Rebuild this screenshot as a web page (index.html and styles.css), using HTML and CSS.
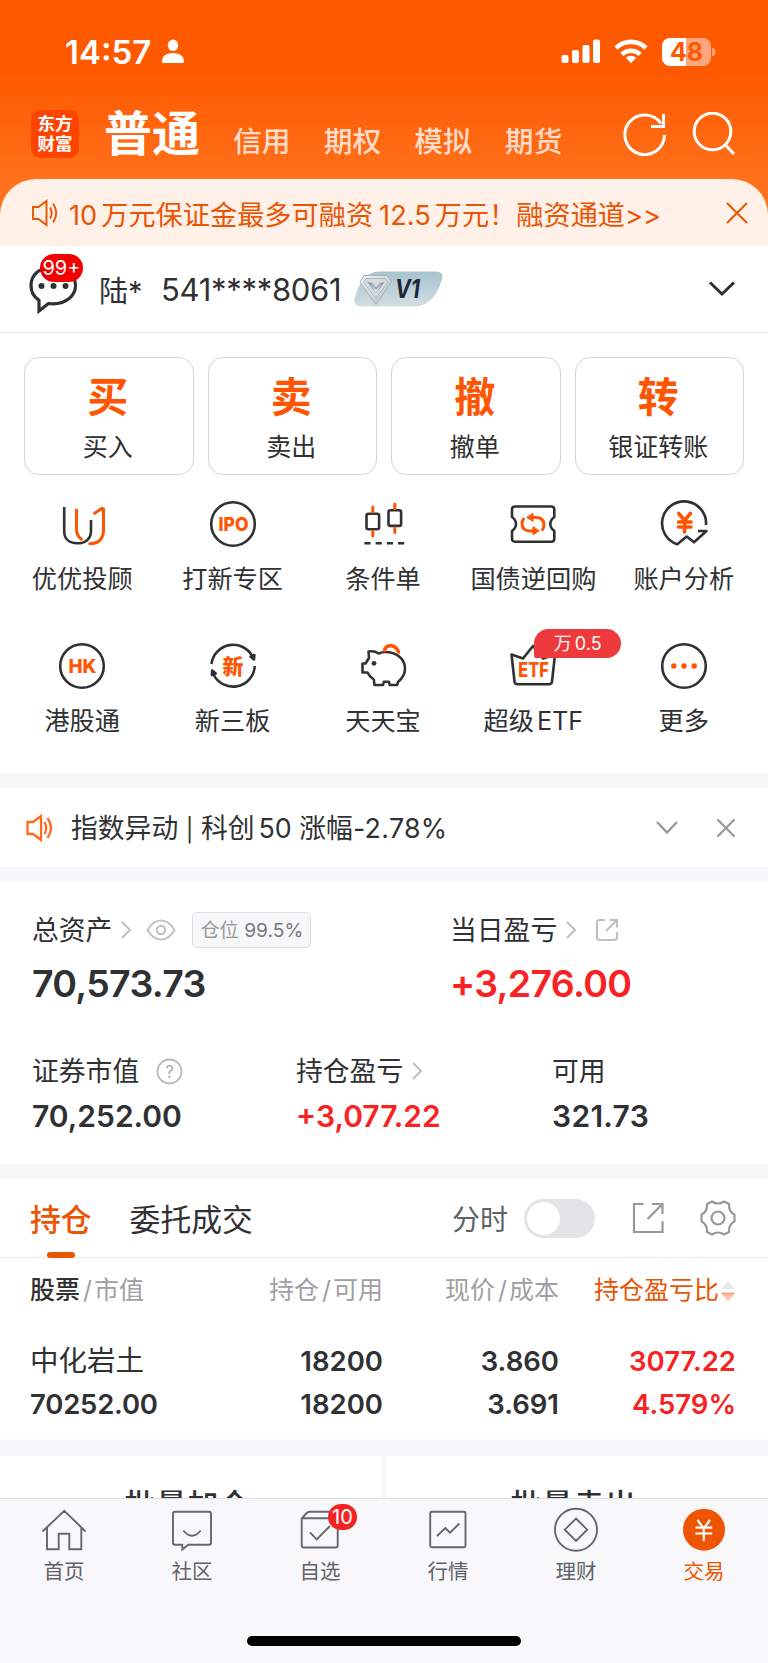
FILE: index.html
```html
<!DOCTYPE html>
<html lang="zh-CN">
<head>
    <meta charset="UTF-8">
    <meta name="viewport" content="width=device-width, initial-scale=1.0">
    <title>交易</title>
    <link rel="stylesheet" href="styles.css">
</head>
<body>
<div class="content">

    <!-- Header -->
    <div class="header">
        <div class="status-bar">
            <span class="time">14:57</span>
            <svg class="person" width="24" height="25" viewBox="0 0 24 25" fill="#fff"><ellipse cx="12" cy="6.3" rx="5.2" ry="5.8"/><path d="M1 22.500c0-5 4-8.500 11-8.500s11 3.500 11 8.500q0 1.500-1.500 1.500h-19Q1 24 1 22.500z"/></svg>
            <svg class="signal" width="40" height="25" viewBox="0 0 40 25" fill="#fff"><rect x="0.500" y="16" width="7" height="8" rx="2"/><rect x="11" y="11" width="7" height="13" rx="2"/><rect x="21.500" y="6" width="7" height="18" rx="2"/><rect x="32" y="0.500" width="7" height="23.500" rx="2"/></svg>
            <svg class="wifi" width="34" height="25" viewBox="0 0 34 25" fill="none" stroke="#fff" stroke-width="4.600"><path d="M2 9a21.500 21.500 0 0 1 30 0"/><path d="M7.800 15.400a13.300 13.300 0 0 1 18.400 0"/><path d="M17 24.300l-5.200-5.500a7.500 7.500 0 0 1 10.400 0z" fill="#fff" stroke="none"/></svg>
            <div class="battery"><span>48</span></div>
            <svg width="5" height="10" viewBox="0 0 5 10"><path d="M1 0.500q3.500 1.500 3.500 4.500T1 9.500z" fill="#ffa57c"/></svg>
        </div>
        <div class="nav">
            <div class="logo"><span>东方</span><span>财富</span></div>
            <span class="nav-active">普通</span>
            <div class="nav-links">
                <a>信用</a>
                <a>期权</a>
                <a>模拟</a>
                <a>期货</a>
            </div>
            <svg class="refresh" width="44" height="44" viewBox="0 0 44 44" fill="none" stroke="#fff" stroke-width="3"><path d="M41.500 23A19.800 19.800 0 1 1 38 11.500"/><path d="M40.500 2v12.500H28"/></svg>
            <svg width="44" height="44" viewBox="0 0 44 44" fill="none" stroke="#fff" stroke-width="3"><circle cx="20.500" cy="19.500" r="18.300"/><path d="M33.500 33l8.500 9"/></svg>
        </div>
    </div>

    <!-- Notice -->
    <div class="notice-wrap">
        <div class="notice">
            <svg width="28" height="28" viewBox="0 0 28 28" fill="none" stroke="#ea5504" stroke-width="1.900"><path d="M2 8h5.500L15.500 2v24L7.500 20H2z"/><path d="M19 8.500q3.500 5.500 0 11M22 4.500q6.500 9.500 0 19"/></svg>
            <span class="notice-text"><i>10</i>万元保证金最多可融资<i>12.5</i>万元！融资通道&gt;&gt;</span>
            <svg width="24" height="24" viewBox="0 0 24 24" stroke="#ea5504" stroke-width="2"><path d="M2 2l20 20M22 2L2 22"/></svg>
        </div>
    </div>

    <!-- Account -->
    <div class="account">
        <div class="message">
            <svg width="50" height="56" viewBox="0 0 50 56"><path d="M24 9C10.500 9 2 17 2 27.500c0 6 3 11.500 8 14.800V53l9.500-7.500c1.500.3 3 .4 4.500.4C37 45.500 46.500 38 46.500 27.500S37 9 24 9z" fill="#fff" stroke="#2f3133" stroke-width="3.200"/><g fill="#2f3133"><circle cx="12.500" cy="28" r="3"/><circle cx="24.500" cy="28" r="3"/><circle cx="36.500" cy="28" r="3"/></g></svg>
            <span class="message-badge">99+</span>
        </div>
        <span class="account-name">陆*</span>
        <span class="account-id">541****8061</span>
        <div class="vip">
            <svg width="89" height="36" viewBox="0 0 89 36">
                <defs>
                    <linearGradient id="vipBg" x1="0" y1="0" x2="0" y2="1"><stop offset="0" stop-color="#a5c4ce"/><stop offset="1" stop-color="#d3dde1"/></linearGradient>
                    <linearGradient id="gem" x1="0" y1="0" x2="1" y2="1"><stop offset="0" stop-color="#f4f8f9"/><stop offset="1" stop-color="#b3bfc4"/></linearGradient>
                </defs>
                <path d="M25 0.500h56q9 0 7 8-5 16-13 22-6 5-15 5H8q-9 0-7.500-8Q8 0.500 25 0.500z" fill="url(#vipBg)"/>
                <path d="M10 4.500h23l4.500 6L22 33.500 6 11z" fill="url(#gem)" stroke="#a3b1b7" stroke-width="1"/>
                <path d="M12 7.500h19l3 4L22 27 9.500 11.500z" fill="#d5dde0" stroke="#9aa9af" stroke-width="0.800"/>
                <path d="M13 10.500l5 1.500 4 4.500 4-4.500 5-1.500-9 12z" fill="#93a3aa"/>
                <path d="M17 13l5 6 5-6-5 9z" fill="#e8eef0"/>
                <text x="41" y="27" class="vip-text" textLength="25" lengthAdjust="spacingAndGlyphs">V1</text>
            </svg>
        </div>
        <svg class="account-arrow" width="28" height="18" viewBox="0 0 28 18" fill="none" stroke="#2f3133" stroke-width="3"><path d="M2 2.500l12 11.500L26 2.500"/></svg>
    </div>

    <!-- Trade buttons -->
    <div class="trade">
        <div class="trade-btn"><b>买</b><span>买入</span></div>
        <div class="trade-btn"><b>卖</b><span>卖出</span></div>
        <div class="trade-btn"><b>撤</b><span>撤单</span></div>
        <div class="trade-btn"><b>转</b><span>银证转账</span></div>
    </div>

    <!-- Feature grid -->
    <div class="features">
        <div class="feature">
            <svg class="icon" viewBox="0 0 48 48"><path d="M6.200 7v24c0 8 5 12.300 13 12.300S33 39 33 31V20"/><g class="hot"><path d="M18.500 10v19c0 5 1.500 8 5 10.300"/><path d="M36.700 13.300l7.300-5 1.500.8V30c0 9-5 13.500-13.800 13.800"/></g></svg>
            <span>优优投顾</span>
        </div>
        <div class="feature">
            <svg class="icon" viewBox="0 0 48 48"><circle cx="24" cy="24" r="21.800"/><text x="9.500" y="31" font-size="19" textLength="30" lengthAdjust="spacingAndGlyphs">IPO</text></svg>
            <span>打新专区</span>
        </div>
        <div class="feature">
            <svg class="icon" viewBox="0 0 48 48"><rect x="7.500" y="13.700" width="12.600" height="15.600" rx="2"/><rect x="29.500" y="10.300" width="12.600" height="15.600" rx="2"/><path d="M5.400 43.300h40" stroke-dasharray="6.200 5"/><g class="hot"><path d="M13.800 7v5M13.800 31.500v4.500M35.800 4v4.500M35.800 28v4.500"/></g></svg>
            <span>条件单</span>
        </div>
        <div class="feature">
            <svg class="icon" viewBox="0 0 48 48"><path d="M6 6.500h36.300q3 0 3 3V17q-4 3-4 7t4 7v7.700q0 3-3 3H6q-3 0-3-3V31q4-3 4-7t-4-7V9.500q0-3 3-3z"/><g class="hot"><path d="M22 17.500h5q7.500 0 8 7 0 3-1.500 5"/><path d="M26 31h-5q-7.500 0-8-7 0-3 1.500-5"/><path d="M24 13.500v8L18 17.500zM24 27v8l6-4z" fill="#ff5500" stroke-width="1"/></g></svg>
            <span>国债逆回购</span>
        </div>
        <div class="feature">
            <svg class="icon" viewBox="0 0 48 48"><path d="M46 25A22 22 0 1 0 17.300 44.300l9.400-7.800 7.300 5.800L46.500 31H38"/><g class="hot yen"><path d="M18.800 13.500l5.800 7 5.800-7M24.600 20v12M18.500 22h12.500M18.500 27h12.500"/></g></svg>
            <span>账户分析</span>
        </div>
        <div class="feature">
            <svg class="icon" viewBox="0 0 48 48"><circle cx="24" cy="24" r="21.800"/><text x="10.500" y="31" font-size="19" textLength="28" lengthAdjust="spacingAndGlyphs">HK</text></svg>
            <span>港股通</span>
        </div>
        <div class="feature">
            <svg class="icon" viewBox="0 0 48 48"><path d="M2.500 22A21.800 21.800 0 0 1 43.500 14.500"/><path d="M45.800 24A21.800 21.800 0 0 1 4.500 32.500"/><path d="M41.500 14.500l3.800-1.500-.3 4.500zM6.700 31.500l-3.800 1.500.3-4.500z" fill="#303133"/><text x="13.500" y="31.500" font-size="21">新</text></svg>
            <span>新三板</span>
        </div>
        <div class="feature">
            <svg class="icon" viewBox="0 0 48 48"><path d="M9.500 9.500c4-.5 7.500 0 10 2 4-1.700 8-1.800 12-1 8.500 1.700 14.500 8 14.500 16 0 6-2.700 10-7 13.500l-.8 3h-7.500l-.8-3.200h-5l-.9 3.200h-8.500l-.7-5.500q-4.500-3-6.300-7H3.500v-9h3l3.500-5.500z"/><circle cx="15" cy="21.300" r="2.400" fill="#303133" stroke="none"/><path class="hot" d="M25.300 8.500c2-6.500 11.500-6.500 14.200 1.500" stroke-width="3.500"/></svg>
            <span>天天宝</span>
        </div>
        <div class="feature">
            <svg class="icon" viewBox="0 0 48 48"><path d="M2.500 12.500L14 16.500 24 4l10 12.500 12-4-3 27q-.4 2.700-3 2.700H8.500q-2.600 0-3-2.700z"/><text x="9.300" y="35.300" font-size="19.500" textLength="30.500" lengthAdjust="spacingAndGlyphs">ETF</text></svg>
            <span>超级<i>ETF</i></span>
            <em class="feature-badge">万<i>0.5</i></em>
        </div>
        <div class="feature">
            <svg class="icon" viewBox="0 0 48 48"><circle cx="24" cy="24" r="21.800"/><g fill="#ff5500" stroke="none"><circle cx="13.800" cy="24" r="2.700"/><circle cx="24" cy="24" r="2.700"/><circle cx="34.200" cy="24" r="2.700"/></g></svg>
            <span>更多</span>
        </div>
    </div>

    <!-- Index alert -->
    <div class="alert">
        <svg width="30" height="28" viewBox="0 0 30 28" fill="none" stroke="#ff6a1f" stroke-width="2.300"><path d="M3.500 8H9l8-6v24l-8-6H3.500z"/><path d="M20.500 8q3.500 6 0 12M23.500 4q7 10 0 20"/></svg>
        <span class="alert-text">指数异动 <u>|</u> 科创<i>50</i> 涨幅<i class="rate">-2.78%</i></span>
        <svg class="alert-arrow" width="24" height="16" viewBox="0 0 24 16" fill="none" stroke="#999" stroke-width="2.400"><path d="M2 2l10 10.500L22 2"/></svg>
        <svg width="20" height="20" viewBox="0 0 20 20" stroke="#999" stroke-width="2.200"><path d="M1.500 1.500l17 17M18.500 1.500l-17 17"/></svg>
    </div>

    <!-- Assets -->
    <div class="assets">
        <div class="assets-top">
            <div>
                <div class="label"><span>总资产</span>
                    <svg class="more" viewBox="0 0 12 18"><path d="M2 1l8 8-8 8"/></svg>
                    <svg class="eye" width="30" height="22" viewBox="0 0 30 22" fill="none" stroke="#c4c4c6" stroke-width="2.200"><path d="M1.500 11Q7 1.500 15 1.500T28.500 11Q23 20.500 15 20.500T1.500 11z"/><circle cx="15" cy="11" r="4.200"/></svg>
                    <div class="tag">仓位 <b>99.5%</b></div>
                </div>
                <div class="big">70,573.73</div>
            </div>
            <div>
                <div class="label"><span>当日盈亏</span>
                    <svg class="more" viewBox="0 0 12 18"><path d="M2 1l8 8-8 8"/></svg>
                    <svg class="share" width="24" height="24" viewBox="0 0 24 24" fill="none" stroke="#c0c0c2" stroke-width="2.100"><path d="M10 2H4.500Q2 2 2 4.500v15Q2 22 4.500 22h15q2.500 0 2.500-2.500V14M14.500 2H22v7.500M22 2L11 13"/></svg>
                </div>
                <div class="big red">+3,276.00</div>
            </div>
        </div>
        <div class="assets-bottom">
            <div>
                <div class="label"><span>证券市值</span>
                    <svg class="help" width="27" height="27" viewBox="0 0 27 27"><circle cx="13.500" cy="13.500" r="12" fill="none" stroke="#b8b8ba" stroke-width="1.800"/><text x="13.500" y="19.500" text-anchor="middle">?</text></svg>
                </div>
                <div class="mid">70,252.00</div>
            </div>
            <div>
                <div class="label"><span>持仓盈亏</span>
                    <svg class="more" viewBox="0 0 12 18"><path d="M2 1l8 8-8 8"/></svg>
                </div>
                <div class="mid red">+3,077.22</div>
            </div>
            <div>
                <div class="label"><span>可用</span></div>
                <div class="mid wide">321.73</div>
            </div>
        </div>
    </div>

    <!-- Holdings -->
    <div class="holdings">
        <div class="tabs">
            <span class="tab active">持仓</span>
            <span class="tab">委托成交</span>
            <span class="chart-label">分时</span>
            <div class="toggle"></div>
            <svg class="open" width="32" height="32" viewBox="0 0 32 32" fill="none" stroke="#98989a" stroke-width="2.200"><path d="M11.500 2H2v28h28.500V19M20 2h10.500v10M30.500 2L15.500 17"/></svg>
            <svg width="36" height="38" viewBox="0 0 36 38" fill="none" stroke="#98989a" stroke-width="2.200" stroke-linejoin="round"><path d="M12 2.500Q18 6.500 24 2.500L29 5Q28.500 12.500 34.500 15.500v7Q28.500 25.500 29 33l-5 2.500Q18 31.500 12 35.500L7 33Q7.500 25.500 1.500 22.500v-7Q7.500 12.500 7 5z"/><circle cx="18" cy="19" r="6.500"/></svg>
        </div>
        <div class="row head">
            <span><strong>股票</strong><s>/</s>市值</span>
            <span>持仓<s>/</s>可用</span>
            <span>现价<s>/</s>成本</span>
            <span class="sort">持仓盈亏比<svg width="17" height="22" viewBox="0 0 17 22"><defs><linearGradient id="down" x1="0" y1="0" x2="0" y2="1"><stop offset="0" stop-color="#f9a67b"/><stop offset="1" stop-color="#fde0d0"/></linearGradient></defs><path d="M9 1l7 8H2z" fill="#e8e8ea"/><path d="M1.500 12.500h15l-7.500 9z" fill="url(#down)"/></svg></span>
        </div>
        <div class="row stock">
            <span>中化岩土</span>
            <span>18200</span>
            <span>3.860</span>
            <span class="red">3077.22</span>
        </div>
        <div class="row stock second">
            <span>70252.00</span>
            <span>18200</span>
            <span>3.691</span>
            <span class="red">4.579%</span>
        </div>
    </div>

    <div class="batch">
        <div>批量加仓</div>
        <div>批量卖出</div>
    </div>
</div>

<!-- Tab bar -->
<div class="tabbar">
    <div class="tabbar-items">
        <div class="tabbar-item">
            <svg viewBox="0 0 48 48"><path d="M2.500 25.500L24.300 4.700 45.500 25.500M7 21.500v21.800h11.700V27.700h10.600v15.600h12V21.500"/></svg>
            <span>首页</span>
        </div>
        <div class="tabbar-item">
            <svg viewBox="0 0 48 48"><path d="M7 5.700h34q2 0 2 2v29q0 2-2 2H20.300L14.300 43.500v-4.800H7q-2 0-2-2v-29q0-2 2-2zM15.300 24.500q8.700 10.500 17.400 0"/></svg>
            <span>社区</span>
        </div>
        <div class="tabbar-item">
            <svg viewBox="0 0 48 48"><path d="M5.700 12.300h36M5.700 12.500l5-5.500q1.200-1.300 3-1.300h21q1.800 0 3 1.300l4 5.500v27q0 2-2 2h-32q-2 0-2-2zM14 26.300l6.700 7L34 20"/></svg>
            <span>自选</span>
            <em class="count">10</em>
        </div>
        <div class="tabbar-item">
            <svg viewBox="0 0 48 48"><rect x="6.200" y="5.700" width="35.300" height="35.600" rx="1.500"/><path d="M13 30l8.300-8 4.700 4.700 9.300-9.200"/></svg>
            <span>行情</span>
        </div>
        <div class="tabbar-item">
            <svg viewBox="0 0 48 48"><circle cx="24" cy="23.700" r="21"/><path d="M24 12.500l11.200 11.200L24 34.900 12.800 23.700z"/></svg>
            <span>理财</span>
        </div>
        <div class="tabbar-item current">
            <svg viewBox="0 0 48 48"><circle cx="24" cy="23.700" r="21" fill="#ee5500" stroke="none"/><path d="M17.500 14l6.300 8.500L30 14M23.800 22v13M15.500 21.700h16.700M15.500 27.500h16.700" stroke="#fff" stroke-width="2.200"/></svg>
            <span>交易</span>
        </div>
    </div>
    <div class="home-indicator"></div>
</div>
</body>
</html>
```

FILE: styles.css
```css
* {
    box-sizing: border-box;
}

body {
    margin: 0;
    width: 768px;
    height: 1663px;
    overflow: hidden;
    background: #fff;
    color: #303133;
    font-family: Inter, "Noto Sans CJK SC", sans-serif;
}

i, em, s, u {
    font-style: normal;
    text-decoration: none;
}

svg {
    display: block;
    flex: none;
}

.content {
    height: 1498px;
    overflow: hidden;
    white-space: nowrap;
}

.red {
    color: #f82222;
}

/* Header */
.header {
    height: 179px;
    background: linear-gradient(#ff5900 0, #ff5900 72px, #ff711b 179px);
    color: #fff;
}

.status-bar {
    display: flex;
    align-items: center;
    height: 103px;
    padding: 0 52px 0 65px;
}

.time {
    width: 96px;
    font-size: 33px;
    font-weight: 600;
}

.signal {
    margin-left: auto;
}

.wifi {
    margin: 0 14px 0 13px;
}

.battery {
    width: 49px;
    height: 28px;
    border-radius: 8px;
    background: linear-gradient(90deg, #fff 49%, #ffa57c 49%);
    color: #ff5900;
    font-size: 25px;
    font-weight: 700;
    line-height: 28px;
    text-align: center;
}

.nav {
    display: flex;
    align-items: center;
    height: 62px;
    padding: 0 32px 0 31px;
}

.logo {
    display: flex;
    flex-direction: column;
    align-items: center;
    justify-content: center;
    width: 48px;
    height: 48px;
    border-radius: 9px;
    background: #ff4400;
    font-size: 17.5px;
    font-weight: 700;
    line-height: 20px;
}

.nav-active {
    margin-left: 25px;
    font-size: 48px;
    font-weight: 700;
    line-height: 62px;
}

.nav-links {
    display: flex;
    gap: 33px;
    margin: 16px auto 0 33px;
    color: #ffdccb;
    font-size: 28.8px;
    font-weight: 500;
    line-height: 40px;
}

.refresh {
    margin-right: 25px;
}

/* Notice */
.notice-wrap {
    background: #ff711b;
}

.notice {
    display: flex;
    align-items: center;
    height: 67px;
    padding: 0 19px 0 31px;
    border-radius: 36px 36px 0 0;
    background: #fff0e8;
    color: #ea5504;
    font-size: 27.2px;
}

.notice-text {
    flex: 1;
    margin-left: 10px;
}

.notice-text i {
    margin-right: 4px;
}

.notice-text i + i {
    margin-left: 6px;
}

/* Account */
.account {
    display: flex;
    align-items: center;
    height: 87px;
    padding: 0 32px 0 29px;
    border-bottom: 1px solid #e9e9eb;
    font-size: 31px;
}

.message {
    position: relative;
    margin-top: -6px;
}

.message-badge {
    position: absolute;
    left: 11px;
    top: -4px;
    width: 43px;
    height: 28px;
    border-radius: 14px;
    background: #f00000;
    color: #fff;
    font-size: 20px;
    line-height: 28px;
    text-align: center;
}

.account-name {
    width: 62px;
    margin-left: 20px;
    font-size: 29px;
}

.account-id {
    letter-spacing: -0.300px;
}

.vip {
    margin-left: 13px;
}

.vip-text {
    fill: #1e2538;
    font-size: 26px;
    font-style: italic;
    font-weight: 700;
}

.account-arrow {
    margin-left: auto;
}

/* Trade buttons */
.trade {
    display: grid;
    grid-template-columns: repeat(4, 1fr);
    gap: 14px;
    padding: 24px 24px 0;
}

.trade-btn {
    display: flex;
    flex-direction: column;
    align-items: center;
    height: 118px;
    padding: 14px 2px 0 0;
    border: 1px solid #d6d6d8;
    border-radius: 15px;
    font-size: 25px;
    line-height: 50px;
}

.trade-btn b {
    color: #ff5500;
    font-size: 41px;
    font-weight: 700;
}

/* Feature grid */
.features {
    display: grid;
    grid-template-columns: repeat(5, 1fr);
    grid-template-rows: 142px 142px;
    height: 298px;
    padding: 25px 9px 0 7px;
}

.feature {
    position: relative;
    display: flex;
    flex-direction: column;
    align-items: center;
    font-size: 25.2px;
    line-height: 36px;
}

.feature > span {
    margin-top: 13px;
}

.feature i {
    margin-left: 3px;
}

.icon {
    width: 48px;
    height: 48px;
    fill: none;
    stroke: #303133;
    stroke-width: 2.6;
    stroke-linejoin: round;
}

.icon .hot {
    stroke: #ff5500;
    stroke-linecap: round;
}

.icon g.hot {
    stroke-width: 3;
}

.icon g.yen {
    stroke-width: 3.6;
}

.icon text {
    fill: #ff5500;
    stroke: none;
    font-weight: 800;
}

.feature-badge {
    position: absolute;
    left: 76px;
    top: -13px;
    width: 87px;
    height: 29px;
    border-radius: 15px 15px 15px 2px;
    background: #ee3a3c;
    color: #fff;
    font-size: 18px;
    line-height: 29px;
    text-align: center;
}

/* Index alert */
.alert {
    display: flex;
    align-items: center;
    height: 109px;
    padding: 0 32px 0 24px;
    border-top: 15px solid #f6f7f9;
    border-bottom: 15px solid #f6f7f9;
    font-size: 26.800px;
}

.alert-text {
    margin: -3px 0 0 17px;
}

.alert-text u {
    font-size: 23px;
}

.alert-text i {
    margin-left: 4px;
}

.alert-text .rate {
    margin-left: 0;
    letter-spacing: 0.300px;
}

.alert-arrow {
    margin: 0 37px 0 auto;
}

/* Assets */
.assets {
    height: 297px;
    padding: 28px 32px 0;
    border-bottom: 15px solid #f6f7f9;
}

.label {
    display: flex;
    align-items: center;
    height: 40px;
    font-size: 26.800px;
}

.label > span {
    margin-top: -3px;
}

.more {
    width: 12px;
    height: 18px;
    margin-left: 8px;
    fill: none;
    stroke: #bdbdbf;
    stroke-width: 1.900;
}

.eye {
    margin-left: 14px;
}

.tag {
    height: 36px;
    margin-left: 16px;
    padding: 0 7px;
    border: 1px solid #dedee2;
    border-radius: 5px;
    background: #f7f7f9;
    color: #999;
    font-size: 19.2px;
    line-height: 34px;
}

.tag b {
    color: #77777a;
    font-weight: 400;
}

.share {
    margin-left: 18px;
}

.assets-top {
    display: grid;
    grid-template-columns: 418px 1fr;
    height: 141px;
}

.assets-bottom {
    display: grid;
    grid-template-columns: 264px 256px 1fr;
}

.big {
    font-size: 37.500px;
    font-weight: 600;
    letter-spacing: -0.700px;
    line-height: 46px;
    margin-top: 11px;
}

.mid {
    font-size: 30px;
    font-weight: 600;
    line-height: 36px;
    margin-top: 7px;
}

.wide {
    letter-spacing: 0.300px;
}

.help {
    margin-left: 17px;
}

.help text {
    fill: #a8a8aa;
    font-size: 17px;
}

/* Holdings */
.tabs {
    display: flex;
    align-items: center;
    height: 79px;
    padding: 0 32px 0 30px;
    border-bottom: 1px solid #ededef;
    font-size: 30.800px;
}

.tab {
    position: relative;
    margin: 3px 38px 0 0;
    line-height: 44px;
}

.tab.active {
    color: #ea5504;
    font-weight: 500;
}

.tab.active::after {
    content: "";
    position: absolute;
    left: 17px;
    bottom: -16px;
    width: 28px;
    height: 6px;
    border-radius: 3px;
    background: #ea5504;
}

.chart-label {
    margin-left: auto;
    color: #606266;
    font-size: 28px;
}

.toggle {
    width: 71px;
    height: 39px;
    margin-left: 16px;
    padding: 3px;
    border-radius: 20px;
    background: #e4e4e6;
}

.toggle::before {
    content: "";
    display: block;
    width: 33px;
    height: 33px;
    border-radius: 50%;
    background: #fff;
}

.open {
    margin: 0 36px 0 37px;
}

.row {
    display: grid;
    grid-template-columns: 170px 183px 176px 177px;
    padding: 0 31px 0 30px;
    text-align: right;
}

.row > :first-child {
    text-align: left;
}

.head {
    height: 64px;
    color: #a0a0a3;
    font-size: 25px;
    line-height: 65px;
}

.head strong {
    color: #303133;
    font-weight: 500;
}

.head s {
    margin: 0 2px 0 3px;
}

.sort {
    display: flex;
    align-items: center;
    justify-content: flex-end;
    color: #ea5504;
}

.stock {
    height: 43px;
    margin-top: 18px;
    font-size: 27.500px;
    font-weight: 600;
    line-height: 42px;
}

.stock:not(.second) > :first-child {
    font-size: 28.500px;
    font-weight: 400;
}

.second {
    height: 56px;
    margin-top: 0;
}

.second > :first-child {
    letter-spacing: -0.200px;
}

.batch {
    display: grid;
    grid-template-columns: 1fr 1fr;
    gap: 4px;
    border-top: 17px solid #f6f7f9;
    background: #f6f7f9;
}

.batch div {
    height: 100px;
    padding-right: 7px;
    background: #fff;
    font-size: 31px;
    font-weight: 500;
    letter-spacing: 0.500px;
    line-height: 98px;
    text-align: center;
}

/* Tab bar */
.tabbar {
    height: 165px;
    border-top: 1px solid #dcdfe4;
    background: #f8f8fb;
}

.tabbar-items {
    display: grid;
    grid-template-columns: repeat(6, 1fr);
    height: 137px;
    padding-top: 7px;
}

.tabbar-item {
    position: relative;
    display: flex;
    flex-direction: column;
    align-items: center;
    color: #606266;
    font-size: 20.500px;
    line-height: 30px;
}

.tabbar-item svg {
    width: 48px;
    height: 48px;
    margin-bottom: 3px;
    fill: none;
    stroke: #66676a;
    stroke-width: 1.900;
}

.tabbar-item.current {
    color: #ee5500;
}

.count {
    position: absolute;
    left: 72px;
    top: -2px;
    width: 29px;
    height: 26px;
    border-radius: 13px;
    background: #f52424;
    color: #fff;
    font-size: 20px;
    line-height: 26px;
    text-align: center;
}

.home-indicator {
    width: 274px;
    height: 10px;
    margin: 0 auto;
    border-radius: 5px;
    background: #000;
}
```
